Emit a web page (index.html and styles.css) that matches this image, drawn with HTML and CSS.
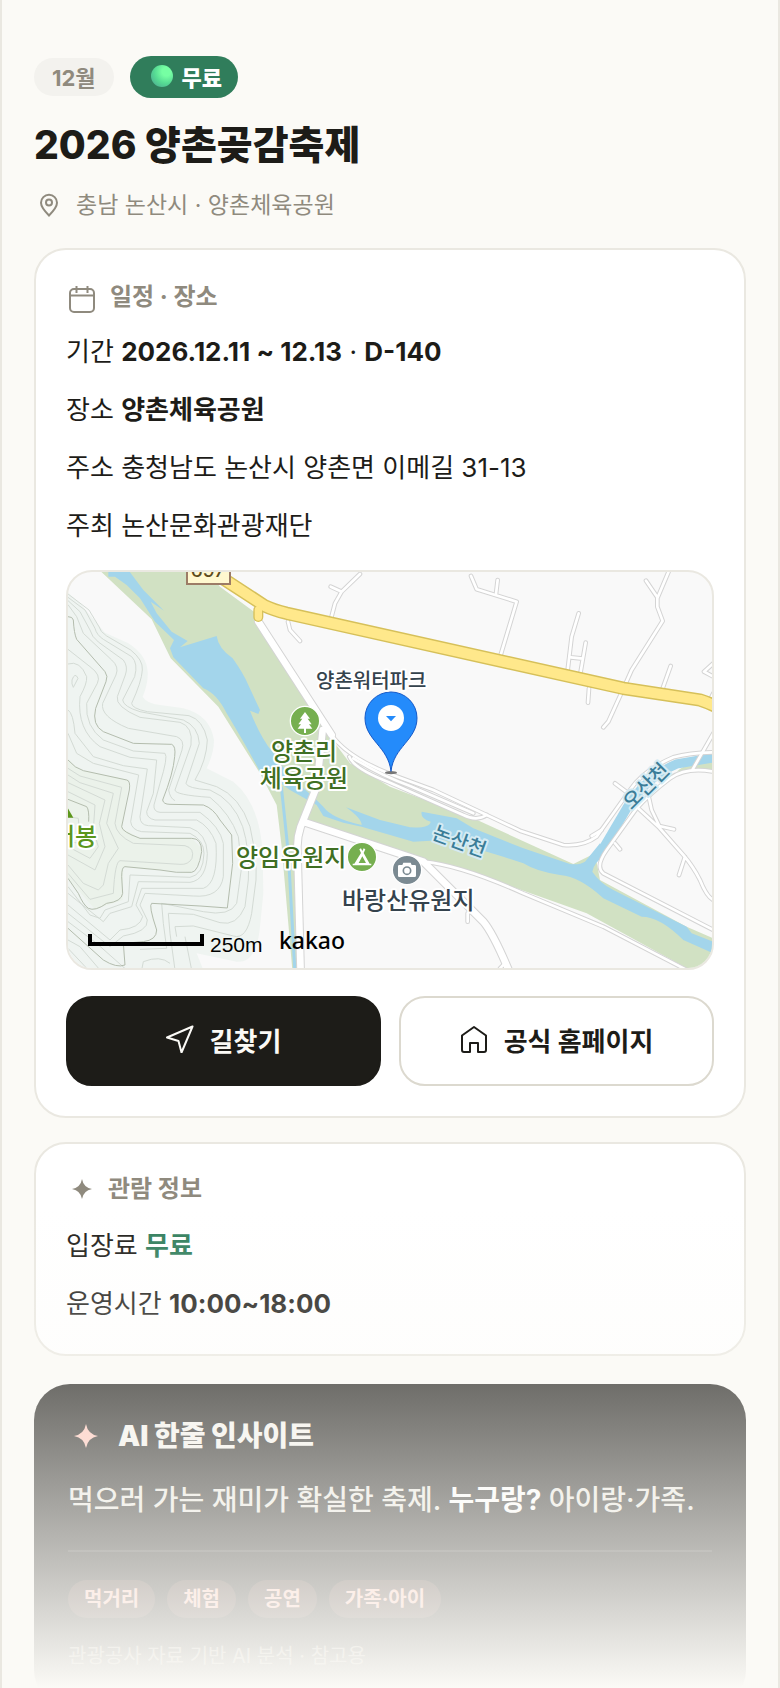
FILE: index.html
```
<!DOCTYPE html>
<html lang="ko">

<head>
    <meta charset="UTF-8">
    <meta name="viewport" content="width=device-width, initial-scale=1.0">
    <title>2026 양촌곶감축제</title>
    <link rel="stylesheet" href="styles.css">
</head>

<body>
    <main class="screen">
        <header class="head">
            <div class="badges">
                <span class="badge badge-month">12월</span>
                <span class="badge badge-free"><i class="dot"></i>무료</span>
            </div>
            <h1>2026 양촌곶감축제</h1>
            <p class="place">
                <svg class="place-icon" viewBox="0 0 22 24" aria-hidden="true">
                    <path d="M11 22.500C7 18.500 3 14.500 3 9.800a8 8 0 0 1 16 0C19 14.500 15 18.500 11 22.500z" />
                    <circle cx="11" cy="9.500" r="3" />
                </svg>
                충남 논산시 · 양촌체육공원
            </p>
        </header>

        <section class="card">
            <h2 class="card-title">
                <svg class="cal-icon" viewBox="0 0 32 32" aria-hidden="true">
                    <rect x="4" y="8" width="24" height="23" rx="4" />
                    <path d="M4 14.500h24M10.500 5v7M21.500 5v7" />
                </svg>
                일정 · 장소
            </h2>
            <ul class="info-list">
                <li>기간 <b>2026.12.11 ~ 12.13</b> · <b>D-140</b></li>
                <li>장소 <b>양촌체육공원</b></li>
                <li>주소 충청남도 논산시 양촌면 이메길 31-13</li>
                <li>주최 논산문화관광재단</li>
            </ul>
            <div class="map">
                <svg viewBox="0 0 644 396" preserveAspectRatio="xMidYMid slice" role="img" aria-label="양촌체육공원 지도">
                    <defs>
                        <g id="minor">
                            <path d="M900 42L845 95L825 130L814 172M845 95L812 80M684 185L690 210L720 243" />
                            <path d="M1233 48L1250 88L1370 125L1322 285M1313 60L1308 102M1556 160L1535 230L1523 330M1577 248L1562 335M1533 292L1568 296M1587 385L1584 428M1832 318L1808 385" />
                            <path d="M1828 30L1792 115L1792 140L1808 183L1715 330L1695 375L1645 485L1630 502M1758 62L1792 112M1960 310L1932 335L1960 350M1960 400L1950 420" />
                            <path d="M815 525Q860 590 990 642L1120 690L1280 765L1380 812L1510 855Q1570 860 1610 830L1710 690Q1750 630 1840 592Q1890 578 1960 577" />
                            <path d="M868 590Q880 625 990 668L1210 765Q1250 785 1280 765M880 595Q960 645 1050 678L1240 760" />
                            <path d="M1960 635Q1880 620 1830 655Q1770 700 1730 745L1640 870Q1605 920 1630 940L1960 1110M1960 520L1897 630M1665 670L1705 700M1595 828L1625 810" />
                            <path d="M1730 740L1795 800L1870 885Q1900 920 1920 960Q1940 1010 1960 1020M1765 705L1775 750L1798 798L1842 808M1875 890L1857 945M1665 850L1680 868" />
                            <path d="M1090 905Q1200 915 1390 1000L1630 1100L1880 1230M1223 1085L1223 1060M1320 1225L1330 1215" />
                        </g>
                        <g id="major">
                            <path d="M595 185L815 525M788 510L770 680L722 800Q712 830 712 860L722 1240" />
                            <path d="M735 787L1000 875L1090 905L1270 1085Q1300 1120 1350 1240" />
                        </g>
                    </defs>
                    <g transform="scale(.33333) translate(-24 -36)">
                        <!-- 산과 등고선 -->
                        <path class="hill" d="M20 95L60 130L120 200L135 218L205 250Q260 285 263 335Q265 370 248 410Q260 430 300 435L370 445Q450 465 462 540Q462 580 440 625L520 665Q600 730 608 880L610 1000L600 1100Q590 1210 530 1205L410 1180L430 1230H20z" />
                        <path class="hill-in" d="M24 600L60 630L208 660L185 805L240 835L395 835L425 865L415 910L395 937L190 920L188 1020L105 1048L24 955z" />
                        <g class="contour">
                            <path d="M24 102L87 150L117 200Q120 215 140 228L212 270Q250 300 247 330Q245 365 215 430Q215 445 262 455L387 467Q430 480 442 540Q440 600 405 660L470 680Q540 710 570 800Q592 900 588 960L575 1060Q560 1140 520 1128L400 1098L345 1100L350 1130" />
                            <path d="M24 112L75 150L105 205Q110 225 130 238L215 290Q235 310 224 350L188 420Q190 440 240 455L370 480Q415 500 418 550L378 670Q380 685 450 690Q520 720 548 800Q570 870 565 960L555 1040Q530 1100 480 1088L400 1063L325 1060L330 1120L345 1230" />
                            <path d="M24 122L60 155L90 210Q95 230 115 246L190 300Q205 320 196 345L172 410Q165 440 240 472L360 487Q400 500 393 555L345 690Q345 705 450 712Q510 760 535 830L545 920L530 1030Q510 1070 430 1055L305 1030L310 1090L320 1165L240 1168" />
                            <path d="M24 134L50 170L70 220L155 300Q178 320 168 345L128 430Q120 470 205 505L350 530Q375 540 366 570L326 690Q330 715 345 722" />
                            <path d="M24 268L90 320Q125 345 112 370L80 430Q75 500 130 540L220 573L315 580Q325 590 300 670L282 735Q280 755 300 757L420 757Q480 800 490 850L490 950Q480 1015 400 1008L255 1000L240 1035L262 1080Q265 1115 190 1128L150 1160L24 1060" />
                            <path d="M24 312Q60 300 80 350Q82 370 60 410Q50 510 120 560L210 592L290 600L280 700L260 755Q260 775 285 780L410 780Q450 800 468 850Q475 970 430 985L245 985L228 1035L248 1070Q240 1105 180 1110L150 1140L24 1035" />
                            <path d="M24 450Q40 460 45 520L100 590L190 617L262 627L240 770Q240 795 265 797L390 803Q440 820 442 880Q440 960 390 967L235 965L215 1040L150 1060L130 1085L24 1000" />
                            <path d="M24 520L50 580L100 610L236 645L212 785Q215 810 245 815L390 820Q432 840 432 880Q430 945 390 952L210 945L205 1025L135 1050L120 1075L90 1065L24 980" />
                            <path d="M36 360Q45 335 54 355L40 382Q34 372 36 360M24 625L60 648L185 682L165 790Q168 825 220 850L375 857Q405 865 396 895Q385 915 360 913L180 902Q165 905 160 1000L90 1018L24 940" />
                            <path d="M24 645L60 668L160 700L140 790L175 865L145 910L130 975L115 990L70 970L24 915" />
                            <path d="M24 668L135 720L118 790L135 860L105 930L24 885M24 695L105 735L100 810L115 860L90 895L24 860M24 770L55 775L60 850L24 845" />
                            <path d="M24 1140L60 1160L120 1230M24 1165L85 1230M24 1190L55 1230M24 1085L110 1150L200 1230M245 1230L250 1205Q300 1185 330 1210M375 1130L395 1230" />
                        </g>
                        <g class="contour contour-dark">
                            <path d="M24 170Q38 170 40 180Q42 220 50 238L135 335Q145 348 138 365L107 445Q95 495 130 515L220 550L335 553Q348 558 344 590Q340 640 308 720Q310 733 330 733L430 735Q460 745 480 780L515 825L518 910L502 1044L420 1038L275 1030Q265 1035 290 1110Q290 1140 250 1145L190 1150L195 1215Q170 1225 130 1200L24 1105" />
                            <path d="M24 600Q45 625 70 632L200 660Q212 662 208 690L185 800Q185 815 240 835L395 835Q425 835 425 875Q415 935 395 937Q350 940 300 930L195 920Q185 920 185 950L188 1000Q185 1025 140 1030Q105 1055 85 1045Q70 1035 55 1000L24 955M24 718L80 740Q88 750 86 785" />
                        </g>

                        <!-- 하천 -->
                        <path class="green" d="M118 30L275 178L332 295L475 440L600 640L650 735L665 860L697 1230L712 1230L700 860L735 790L990 868L1300 960L1580 1060L1890 1230H1960V1135L1880 1100L1620 960L1605 880L1540 912L1240 775L990 680L870 610L810 530L595 165L480 80L440 30zM1850 635Q1890 600 1960 597V630Q1900 622 1850 635z" />
                        <path class="water" d="M145 30H205L250 90L312 152L272 125L290 160L335 215L383 243L360 262L470 228Q475 265 518 295Q550 340 565 375L600 450L595 462L570 452Q600 530 640 580L690 650L760 710L790 740Q815 775 905 795Q905 775 858 742L960 780L1050 802Q1110 805 1112 785Q1080 775 1085 755L1190 775L1240 805L1390 865L1530 912Q1560 915 1575 905L1620 850L1640 880Q1600 910 1597 935Q1620 970 1660 990L1880 1100L1895 1120L1960 1145V1180L1870 1140Q1800 1070 1745 1070L1630 1015Q1560 950 1500 945Q1430 935 1390 910L1330 890Q1230 860 1150 840L1060 845L905 800L850 788L790 768L770 735L690 690L640 655L600 635Q560 560 500 460Q470 400 430 385L340 292L330 265L342 240L285 185L240 115L200 75L165 50H145z" />
                        <path class="stream" d="M1615 890L1700 745Q1760 650 1850 612L1960 593" />
                        <path class="stream stream-thin" d="M664 680L685 880L705 1240" />

                        <!-- 도로 -->
                        <use href="#minor" class="road minor-line" />
                        <use href="#major" class="road major-line" />
                        <use href="#minor" class="road minor-fill" />
                        <use href="#major" class="road major-fill" />
                        <path class="road stub-line" d="M595 150V171" />
                        <path class="road yellow-line" d="M480 50L615 138Q640 150 680 160L1690 385L1920 420Q1950 430 1980 445" />
                        <path class="road stub-fill" d="M595 150V171" />
                        <path class="road yellow-fill" d="M480 50L615 138Q640 150 680 160L1690 385L1920 420Q1950 430 1980 445" />

                        <!-- 아이콘 -->
                        <circle class="poi poi-green" cx="735" cy="483" r="44" />
                        <path class="white" d="M735 456l15 20h-7l12 17h-8l10 13h-19v13h-6v-13h-19l10-13h-8l12-17h-7z" />
                        <circle class="poi poi-green" cx="906" cy="891" r="44" />
                        <path class="white" d="M898 868l5-3 4 8 4-8 5 3-5 11 18 32h5v5h-56v-5h5l20-32zM907 889l-11 20h22z" />
                        <circle class="poi poi-gray" cx="1041" cy="930" r="44" />
                        <path class="white" d="M1018 915h9l3-7h22l3 7h9q4 0 4 4v28q0 4-4 4h-46q-4 0-4-4v-28q0-4 4-4z" />
                        <circle class="lens" cx="1041" cy="932" r="11" />
                        <path class="peak" d="M4 773L22 742L40 773z" />
                        <ellipse class="pin-shadow" cx="993" cy="638" rx="18" ry="5" />
                        <path class="pin" d="M993 634C985 560 915 540 915 474a78 78 0 0 1 156 0C1071 540 1001 560 993 634z" />
                        <circle class="white" cx="993" cy="474" r="39" />
                        <path class="pin-arrow" d="M978 468h30l-15 16z" />
                    </g>
                    <g class="route">
                        <rect x="119" y="-12" width="43" height="24" />
                        <text x="140" y="5">697</text>
                    </g>
                    <g class="label">
                        <text class="label-small" x="248" y="116">양촌워터파크</text>
                        <text class="label-park" x="236" y="188" text-anchor="middle">양촌리</text>
                        <text class="label-park" x="236" y="215" text-anchor="middle">체육공원</text>
                        <text class="label-park" x="168" y="294">양임유원지</text>
                        <text x="274" y="337">바랑산유원지</text>
                        <text class="label-peak" x="-15" y="273">터봉</text>
                        <text class="label-river" text-anchor="middle" transform="translate(389 276) rotate(20)">논산천</text>
                        <text class="label-river" text-anchor="middle" transform="translate(583 219) rotate(-45)">오산천</text>
                    </g>
                    <path class="scale-bar" d="M22 362V372H134V362" />
                    <text class="scale-text" x="142" y="380">250m</text>
                    <text class="kakao" x="211" y="377">kakao</text>
                </svg>
            </div>
            <div class="actions">
                <a class="btn btn-dark" href="#route">
                    <svg viewBox="0 0 28 28" aria-hidden="true">
                        <path d="M26.500 1.500L1 12.500l11.500 3.500 3 11.500z" />
                    </svg>
                    길찾기
                </a>
                <a class="btn" href="#home">
                    <svg viewBox="0 0 28 28" aria-hidden="true">
                        <path d="M2 10.500L14 2l12 8.500V25q0 2-2 2h-6v-9h-8v9H4q-2 0-2-2z" />
                    </svg>
                    공식 홈페이지
                </a>
            </div>
        </section>

        <section class="card card-visit">
            <h2 class="card-title">
                <svg class="star" viewBox="0 0 20 20" aria-hidden="true">
                    <path d="M10 0Q11.500 8.500 20 10Q11.500 11.500 10 20Q8.500 11.500 0 10Q8.500 8.500 10 0z" />
                </svg>
                관람 정보
            </h2>
            <ul class="info-list">
                <li>입장료 <b class="free">무료</b></li>
                <li>운영시간 <b>10:00~18:00</b></li>
            </ul>
        </section>

        <section class="insight">
            <h2>
                <svg class="star" viewBox="0 0 20 20" aria-hidden="true">
                    <path d="M10 0Q11.500 8.500 20 10Q11.500 11.500 10 20Q8.500 11.500 0 10Q8.500 8.500 10 0z" />
                </svg>
                AI 한줄 인사이트
            </h2>
            <p class="insight-text">먹으러 가는 재미가 확실한 축제. <b>누구랑?</b> 아이랑·가족.</p>
            <ul class="tags">
                <li>먹거리</li>
                <li>체험</li>
                <li>공연</li>
                <li>가족·아이</li>
            </ul>
            <p class="source">관광공사 자료 기반 AI 분석 · 참고용</p>
        </section>
    </main>
</body>

</html>
```
FILE: styles.css
```
* {
    box-sizing: border-box;
    margin: 0;
    padding: 0;
}

body {
    background-color: #fbfaf6;
    color: #1d1c18;
    font-family: Inter, "Noto Sans CJK KR", sans-serif;
    font-size: 26px;
}

ul {
    list-style: none;
}

svg {
    display: block;
    flex-shrink: 0;
}

.screen {
    position: relative;
    height: 100vh;
    padding: 56px 32px 0;
    border-left: 2px solid #eae8e1;
    border-right: 2px solid #eae8e1;
    overflow: hidden;
}

/* 아래쪽으로 갈수록 흐려지는 막 */
.screen::after {
    content: "";
    position: absolute;
    left: -2px;
    right: -2px;
    bottom: 0;
    height: 480px;
    background: linear-gradient(rgba(251, 250, 246, 0), #fbfaf6);
    pointer-events: none;
}

.badges {
    display: flex;
    align-items: center;
    gap: 16px;
}

.badge {
    display: flex;
    align-items: center;
    padding-bottom: 2px;
    border-radius: 21px;
    font-size: 22px;
    font-weight: 700;
}

.badge-month {
    height: 38px;
    padding-left: 18px;
    padding-right: 18px;
    background-color: #f3f2ee;
    color: #8f8a7e;
}

.badge-free {
    height: 42px;
    gap: 9px;
    padding-left: 21px;
    padding-right: 16px;
    background-color: #307d5b;
    color: #fff;
    font-weight: 900;
}

.dot {
    width: 22px;
    height: 22px;
    border-radius: 50%;
    background: radial-gradient(circle at 70% 30%, #76ffa3 20%, #55d993 55%, #4b9e92 100%);
}

h1 {
    margin-top: 22px;
    font-size: 39px;
    font-weight: 800;
    line-height: 50px;
}

.place {
    display: flex;
    align-items: center;
    gap: 16px;
    margin: 18px 0 26px;
    padding-left: 4px;
    color: #8f8a7e;
    font-size: 23px;
    line-height: 34px;
}

.place-icon {
    width: 22px;
    height: 24px;
    fill: none;
    stroke: #8f8a7e;
    stroke-width: 2;
}

.card {
    margin-bottom: 24px;
    padding: 30px;
    border: 2px solid #eae8e1;
    border-radius: 32px;
    background-color: #fff;
}

.card-title {
    display: flex;
    align-items: center;
    gap: 12px;
    margin-bottom: 18px;
    color: #8f8a7e;
    font-size: 24px;
    font-weight: 700;
    line-height: 34px;
}

.cal-icon {
    width: 32px;
    height: 32px;
    fill: none;
    stroke: #8f8a7e;
    stroke-width: 2;
}

.info-list {
    display: flex;
    flex-direction: column;
    gap: 18px;
    line-height: 40px;
}

.map {
    height: 400px;
    margin: 24px 0 26px;
    border: 2px solid #eae8e1;
    border-radius: 26px;
    background-color: #f9f9f9;
    overflow: hidden;
}

.map svg {
    width: 100%;
    height: 100%;
}

.hill {
    fill: #eff4f1;
}

.hill-in {
    fill: #ebf2ea;
}

.contour {
    fill: none;
    stroke: #d3dad4;
    stroke-width: 3;
}

.contour-dark {
    stroke: #b3bcad;
}

.green {
    fill: #d1e1c3;
}

.water {
    fill: #a3d5eb;
}

.stream {
    fill: none;
    stroke: #a3d5eb;
    stroke-width: 28;
}

.stream-thin {
    stroke-width: 9;
}

.road {
    fill: none;
    stroke: #fff;
    stroke-linecap: round;
    stroke-linejoin: round;
}

.minor-line {
    stroke: #d4d4d4;
    stroke-width: 14;
}

.minor-fill {
    stroke-width: 8;
}

.major-line {
    stroke: #d4d4d4;
    stroke-width: 26;
}

.major-fill {
    stroke-width: 20;
}

.yellow-line {
    stroke: #d6c05a;
    stroke-width: 40;
}

.yellow-fill {
    stroke: #ffe88b;
    stroke-width: 31;
}

.stub-line {
    stroke: #d6c05a;
    stroke-width: 30;
}

.stub-fill {
    stroke: #ffe88b;
    stroke-width: 22;
}

.poi {
    stroke: #fff;
    stroke-width: 4;
}

.poi-green {
    fill: #76af50;
}

.poi-gray {
    fill: #7b8a92;
}

.white {
    fill: #fff;
}

.lens {
    fill: none;
    stroke: #7b8a92;
    stroke-width: 5;
}

.peak {
    fill: #5c961b;
}

.pin {
    fill: #248bfb;
    stroke: #1559c8;
    stroke-width: 3;
}

.pin-arrow {
    fill: #248bfb;
}

.pin-shadow {
    fill: #777;
}

.route rect {
    fill: #fff8cf;
    stroke: #9c7c66;
    stroke-width: 2;
}

.route text {
    fill: #5c4b1c;
    font-size: 19px;
    font-weight: 500;
    text-anchor: middle;
}

.label text {
    fill: #35434d;
    stroke: #fff;
    stroke-width: 4px;
    stroke-linejoin: round;
    paint-order: stroke;
    font-family: "Noto Sans CJK KR", sans-serif;
    font-size: 24px;
    font-weight: 500;
}

.label .label-small {
    font-size: 20px;
}

.label .label-park {
    fill: #3f6f23;
}

.label .label-peak {
    fill: #5c961b;
}

.label .label-river {
    fill: #3b7d98;
    stroke: #d5ebf3;
    font-size: 20px;
}

.scale-bar {
    fill: none;
    stroke: #000;
    stroke-width: 4;
}

.scale-text {
    font-family: "Liberation Sans", sans-serif;
    font-size: 21px;
}

.kakao {
    font-family: "Noto Sans", sans-serif;
    font-size: 23px;
    font-weight: 500;
}

.actions {
    display: grid;
    grid-template-columns: 1fr 1fr;
    gap: 18px;
}

.btn {
    display: flex;
    align-items: center;
    justify-content: center;
    gap: 16px;
    height: 90px;
    padding-bottom: 4px;
    border: 2px solid #dcd9cf;
    border-radius: 26px;
    color: #1d1c18;
    font-size: 26px;
    font-weight: 700;
    text-decoration: none;
}

.btn svg {
    width: 28px;
    height: 28px;
    fill: none;
    stroke: currentColor;
    stroke-width: 2;
    stroke-linejoin: round;
}

.btn-dark {
    border-color: #1d1c18;
    background-color: #1d1c18;
    color: #fbfaf6;
}

.card-visit {
    margin-bottom: 28px;
}

.card-visit .card-title {
    gap: 16px;
    margin-bottom: 22px;
    padding-left: 6px;
    line-height: 30px;
}

.star {
    width: 20px;
    height: 20px;
    fill: #8f8a7e;
}

.free {
    color: #307d5b;
}

.insight {
    padding: 32px 34px;
    border-radius: 36px;
    background-color: #1d1c18;
    color: #e8e6df;
}

.insight h2 {
    display: flex;
    align-items: center;
    gap: 20px;
    padding-left: 6px;
    color: #f4f2ec;
    font-size: 28px;
    font-weight: 900;
    line-height: 40px;
}

.insight .star {
    width: 24px;
    height: 24px;
    fill: #ffc2b5;
}

.insight-text {
    margin-top: 20px;
    padding-bottom: 26px;
    border-bottom: 2px solid rgba(255, 255, 255, .12);
    font-size: 28px;
    font-weight: 500;
    line-height: 48px;
}

.insight-text b {
    color: #fff;
}

.tags {
    display: flex;
    flex-wrap: wrap;
    gap: 12px;
    margin: 28px 0 20px;
}

.tags li {
    padding: 0 16px;
    border-radius: 19px;
    background-color: rgba(255, 160, 145, .18);
    color: #ffc2b5;
    font-size: 20px;
    font-weight: 700;
    line-height: 38px;
}

.source {
    color: #9a958a;
    font-size: 20px;
    line-height: 36px;
}
```
